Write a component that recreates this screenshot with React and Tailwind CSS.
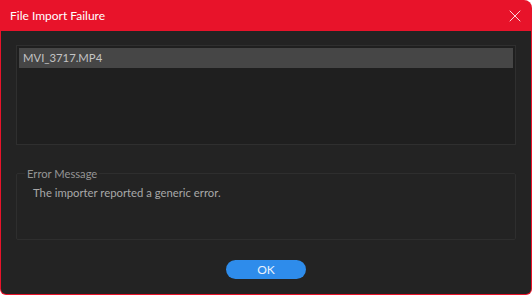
import { X } from 'lucide-react'

export default function App() {
  return (
    <div className="w-[532px] h-[295px] bg-[#e8132a] rounded-tr-[8px] rounded-b-[6px] p-[1px] pt-0 font-['Lato',sans-serif] overflow-hidden">
      {/* Title bar */}
      <div className="h-[31px] flex items-center justify-between pl-[9px] pr-[6px]">
        <span className="text-[12px] text-white pt-[1px]">File Import Failure</span>
        <X className="w-[20px] h-[20px] text-white" strokeWidth={1} />
      </div>

      {/* Body */}
      <div className="h-[263px] bg-[#232323] rounded-b-[5px] px-[15px] pt-[14px]">
        {/* File list */}
        <div className="h-[100px] bg-[#1f1f1f] border border-[#2f2f2f] p-[2px]">
          <div className="h-[20px] bg-[#464646] flex items-center pl-[4px] text-[11.3px] text-[#c4c4c4]">
            MVI_3717.MP4
          </div>
        </div>

        {/* Error message group */}
        <div className="relative mt-[28px] h-[67px] border border-[#2e2e2e] rounded-[2px]">
          <span className="absolute left-[8px] top-[-8px] bg-[#232323] px-[2px] text-[11.2px] leading-[16px] text-[#959595]">
            Error Message
          </span>
          <p className="pl-[16px] pt-[11px] text-[11.3px] text-[#a8a8a8]">
            The importer reported a generic error.
          </p>
        </div>

        <div className="flex justify-center mt-[20px]">
          <button className="w-[80px] h-[19px] rounded-full bg-[#2e8ceb] text-[12px] leading-none text-[#e8f1fc]">
            OK
          </button>
        </div>
      </div>
    </div>
  )
}
